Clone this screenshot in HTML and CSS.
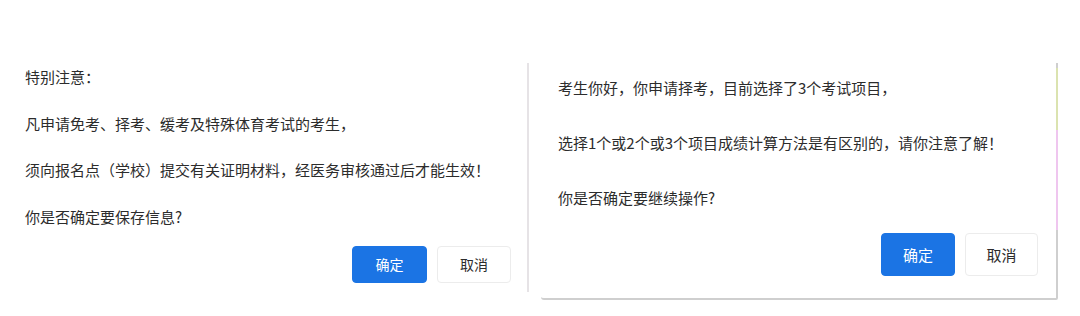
FILE: index.html
```html
<!DOCTYPE html>
<html lang="zh-CN">
<head>
    <meta charset="UTF-8">
    <title>确认对话框</title>
    <link rel="stylesheet" href="styles.css">
</head>
<body>
    <div class="page">
        <!-- 保存信息确认 -->
        <div class="panel-left">
            <div class="msg">
                <p>特别注意：</p>
                <p>凡申请免考、择考、缓考及特殊体育考试的考生，</p>
                <p>须向报名点（学校）提交有关证明材料，经医务审核通过后才能生效！</p>
                <p>你是否确定要保存信息?</p>
            </div>
            <div class="actions">
                <button class="btn btn-primary">确定</button>
                <button class="btn">取消</button>
            </div>
        </div>

        <!-- 择考确认 -->
        <div class="panel-right">
            <div class="dialog">
                <div class="msg msg-wide">
                    <p>考生你好，你申请择考，目前选择了3个考试项目，</p>
                    <p>选择1个或2个或3个项目成绩计算方法是有区别的，请你注意了解！</p>
                    <p>你是否确定要继续操作?</p>
                </div>
                <div class="actions actions-wide">
                    <button class="btn btn-primary btn-tall">确定</button>
                    <button class="btn btn-tall">取消</button>
                </div>
            </div>
            <div class="edge"></div>
        </div>
    </div>
</body>
</html>
```

FILE: styles.css
```css
/* Basic Styling */
body {
    margin: 0;
    background: #fff;
    font-family: "Noto Sans CJK SC", "Liberation Sans", sans-serif;
    color: #2c2c2c;
}

.page {
    display: flex;
    width: 1080px;
    height: 316px;
}

p {
    margin: 0;
}

.msg p {
    font-size: 15px;
    line-height: 20px;
    margin-bottom: 26.5px;
    white-space: nowrap;
}

.msg p:last-child {
    margin-bottom: 0;
}

/* left dialog */
.panel-left {
    width: 529px;
    height: 229px;
    margin-top: 63px;
    padding: 4px 16px 0 25px;
    box-sizing: border-box;
    border-right: 2px solid #e6e3e6;
}

.actions {
    display: flex;
    justify-content: flex-end;
    gap: 10px;
    margin-top: 19px;
}

.btn {
    width: 74px;
    height: 37px;
    border: 1px solid #ececec;
    border-radius: 4px;
    background: #fff;
    color: #2c2c2c;
    font-family: inherit;
    font-size: 14px;
    padding: 0;
    cursor: pointer;
}

.btn-primary {
    width: 75px;
    background: #1b74e4;
    border-color: #1b74e4;
    color: #fff;
}

/* right dialog */
.panel-right {
    display: flex;
    margin-top: 63px;
    margin-left: 12px;
    height: 237px;
}

.dialog {
    width: 515px;
    padding: 15px 18px 0 17px;
    box-sizing: border-box;
    border-bottom: 2px solid #cfcfcf;
    border-bottom-left-radius: 3px;
}

.msg-wide p {
    margin-bottom: 35px;
}

.actions-wide {
    margin-top: 25px;
}

.btn-tall {
    width: 73px;
    height: 43px;
    font-size: 15px;
}

.btn-tall.btn-primary {
    width: 74px;
}

.edge {
    width: 2px;
    border-bottom-right-radius: 3px;
    background: linear-gradient(to bottom, #cfcfcf 0 5px, #dbe3b0 5px 67px, #efc6ef 67px 167px, #cfcfcf 167px);
}
```
